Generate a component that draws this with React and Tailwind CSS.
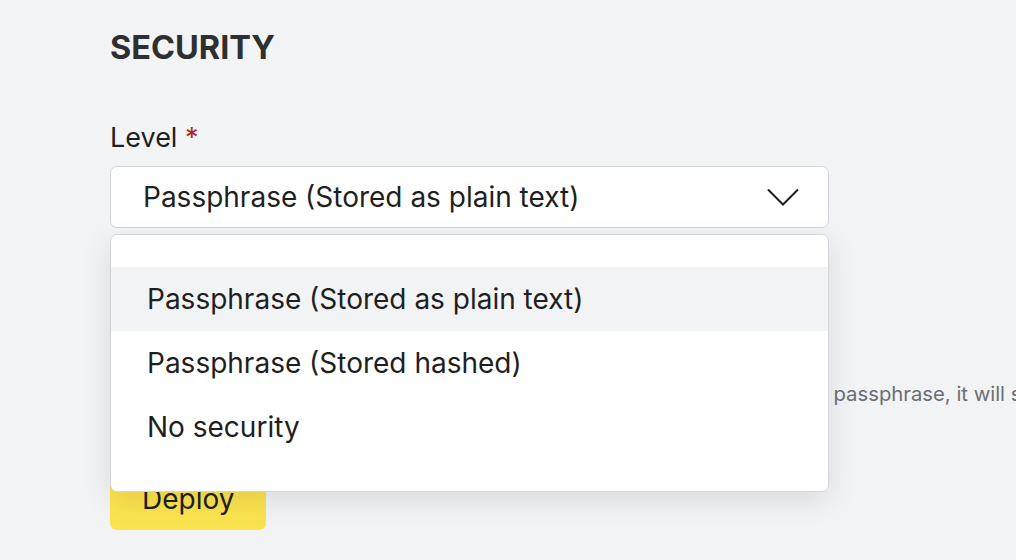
import { useState } from 'react'

const OPTIONS = [
  'Passphrase (Stored as plain text)',
  'Passphrase (Stored hashed)',
  'No security',
]

const Chevron = () => (
  <svg width="32" height="18" viewBox="0 0 32 18" fill="none" stroke="#1f1f1f" strokeWidth={2}>
    <path d="M1 1.5l15 15 15-15" />
  </svg>
)

export default function App() {
  const [level] = useState(OPTIONS[0])
  return (
    <div className="h-[560px] overflow-hidden bg-[#f2f3f5] font-['Inter',sans-serif] text-[#1f1f1f]">
      <div className="pl-[110px] pt-[31px]">
        <h2 className="text-[32.5px] font-bold leading-[34px] text-[#2f2f2f]">SECURITY</h2>
        <label className="mt-[57px] block text-[27px] leading-[32px]">
          Level <span className="text-[#b3261e]">*</span>
        </label>
        <div className="relative mt-[12px] w-[719px]">
          <button className="flex h-[62px] w-full items-center justify-between rounded-[7px] border border-[#d3d5da] bg-white pl-[32px] pr-[29px] text-left text-[28px]">
            <span>{level}</span>
            <Chevron />
          </button>
          <ul className="absolute left-0 top-full z-10 mt-[6px] w-full rounded-[7px] border border-[#d3d5da] bg-white py-[32px] shadow-[0_8px_30px_rgba(0,0,0,0.1)]">
            {OPTIONS.map((o) => (
              <li
                key={o}
                className={`flex h-[64px] items-center pl-[36px] text-[28px] ${o === level ? 'bg-[#f2f3f5]' : ''}`}
              >
                {o}
              </li>
            ))}
          </ul>
        </div>
        <p className="mt-[153px] whitespace-nowrap text-[20.3px] leading-[26px] text-[#6b6e76]">
          Visitors must type the passphrase before they can see it. If you change the passphrase, it will sign everyone out.
        </p>
        <button className="mt-[61px] h-[62px] rounded-[7px] bg-[#fbe34f] px-[32px] text-[28px]">Deploy</button>
      </div>
    </div>
  )
}
